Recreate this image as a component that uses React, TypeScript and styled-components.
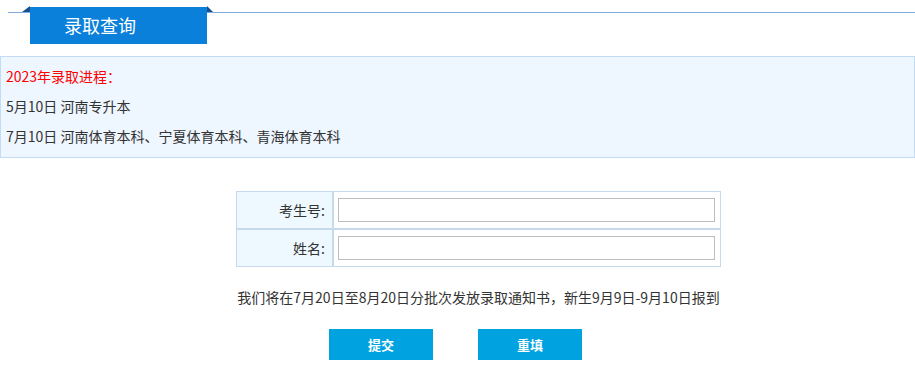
import React from "react";
import styled, { createGlobalStyle } from "styled-components";

const Global = createGlobalStyle`
  html, body { margin: 0; padding: 0; background: #fff; }
  body { font-family: "Noto Sans CJK SC", "Noto Sans", sans-serif; color: #333; font-size: 14px; }
`;

const Page = styled.div`
  width: 915px;
  display: flex;
  flex-direction: column;
`;

const Header = styled.div`
  height: 44px;
  display: flex;
  flex-direction: column;
`;

const Rule = styled.div`
  height: 13px;
  margin-left: 8px;
  border-bottom: 1px solid #7eaadc;
  box-sizing: border-box;
`;

const Tab = styled.div`
  position: relative;
  margin-top: -6px;
  margin-left: 30px;
  width: 177px;
  height: 37px;
  background: #0a80da;
  color: #fff;
  font-size: 18px;
  line-height: 37px;
  padding-left: 34px;
  box-sizing: border-box;
  &::before, &::after {
    content: "";
    position: absolute;
    top: -1px;
    width: 0;
    height: 0;
    border-bottom: 6px solid #1b4f8e;
  }
  &::before { left: -8px; border-left: 8px solid transparent; }
  &::after { right: -6px; border-right: 6px solid transparent; }
`;

const InfoBox = styled.div`
  margin-top: 12px;
  border: 1px solid #c3dbf3;
  background: #eef6ff;
  padding: 4px 5px 5px;
  height: 102px;
  box-sizing: border-box;
`;

const Line = styled.div<{ $red?: boolean }>`
  line-height: 30px;
  font-size: 14px;
  color: ${(p) => (p.$red ? "#ff0000" : "#333")};
`;

const FormWrap = styled.div`
  margin-top: 33px;
  margin-left: 236px;
  width: 485px;
  display: flex;
  flex-direction: column;
  align-items: center;
`;

const Table = styled.div`
  width: 485px;
  box-sizing: border-box;
  display: grid;
  grid-template-columns: 95px 1fr;
  grid-auto-rows: 36px;
  gap: 2px;
  padding: 1px;
  background: #c7daed;
`;

const Label = styled.div`
  background: #eef8ff;
  display: flex;
  align-items: center;
  justify-content: flex-end;
  padding-right: 7px;
  font-size: 14px;
  color: #333;
`;

const Cell = styled.div`
  background: #fff;
  display: flex;
  align-items: center;
  padding-left: 4px;
`;

const Input = styled.input`
  width: 377px;
  height: 24px;
  box-sizing: border-box;
  border: 1px solid #bdbdbd;
  outline: none;
  margin: 0;
  padding: 0 4px;
`;

const Notice = styled.div`
  margin-top: 20px;
  line-height: 20px;
  font-size: 14px;
  color: #333;
  white-space: nowrap;
`;

const Buttons = styled.div`
  margin-top: 22px;
  display: flex;
  justify-content: center;
  gap: 45px;
  padding-right: 4px;
`;

const Button = styled.button`
  width: 104px;
  height: 31px;
  border: none;
  background: #00a3e0;
  color: #fff;
  font-family: "Noto Sans CJK SC", sans-serif;
  font-size: 13px;
  font-weight: 600;
  cursor: pointer;
  padding: 0;
`;

export default function App() {
  return (
    <Page>
      <Global />
      <Header>
        <Rule />
        <Tab>录取查询</Tab>
      </Header>
      <InfoBox>
        <Line $red>2023年录取进程：</Line>
        <Line>5月10日 河南专升本</Line>
        <Line>7月10日 河南体育本科、宁夏体育本科、青海体育本科</Line>
      </InfoBox>
      <FormWrap>
        <Table>
          <Label>考生号:</Label>
          <Cell><Input type="text" /></Cell>
          <Label>姓名:</Label>
          <Cell><Input type="text" /></Cell>
        </Table>
        <Notice>我们将在7月20日至8月20日分批次发放录取通知书，新生9月9日-9月10日报到</Notice>
      </FormWrap>
      <Buttons>
        <Button>提交</Button>
        <Button>重填</Button>
      </Buttons>
    </Page>
  );
}
